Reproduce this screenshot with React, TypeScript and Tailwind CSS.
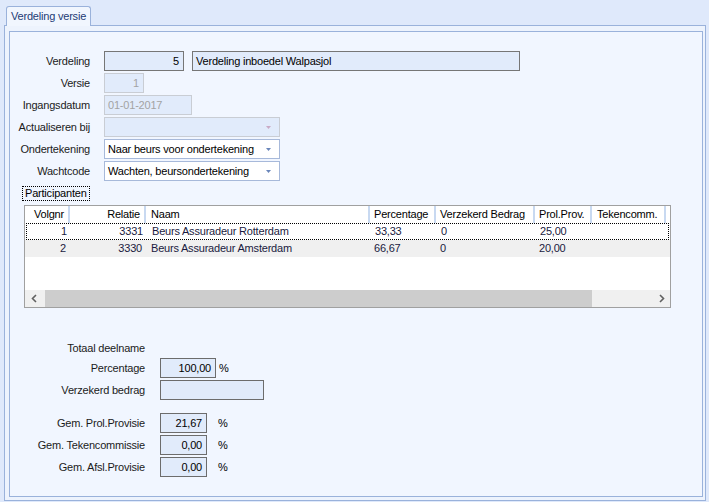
import React from "react";

const cols = [
  { label: "Volgnr", w: "w-[45px]", align: "text-right pr-[4px]" },
  { label: "Relatie", w: "w-[76px]", align: "text-right pr-[4px]" },
  { label: "Naam", w: "w-[224px]", align: "text-left pl-[5px]" },
  { label: "Percentage", w: "w-[66px]", align: "text-left pl-[4px]" },
  { label: "Verzekerd Bedrag", w: "w-[99px]", align: "text-left pl-[4px]" },
  { label: "Prol.Prov.", w: "w-[57px]", align: "text-left pl-[4px]" },
  { label: "Tekencomm.", w: "w-[74px]", align: "text-left pl-[5px]" },
];

const rows = [
  ["1", "3331", "Beurs Assuradeur Rotterdam", "33,33", "0", "25,00", ""],
  ["2", "3330", "Beurs Assuradeur Amsterdam", "66,67", "0", "20,00", ""],
];

function Arrow({ color }: { color: string }) {
  return (
    <svg width="5" height="3" viewBox="0 0 5 3" className="shrink-0">
      <path d="M0 0h5L2.5 3z" fill={color} />
    </svg>
  );
}

function Label({ children, w = "w-[80px]" }: { children: React.ReactNode; w?: string }) {
  return <span className={`${w} shrink-0 text-right text-[#1b1b1b]`}>{children}</span>;
}

function Combo({ text, disabled }: { text?: string; disabled?: boolean }) {
  return (
    <div
      className={`ml-[14px] w-[176px] h-full border flex items-center pl-[3px] pr-[8px] ${
        disabled ? "border-[#c9cdd4] bg-[#e1ebfb]" : "border-[#a7b9da] bg-white"
      }`}
    >
      <span className="flex-1 text-black">{text}</span>
      <Arrow color={disabled ? "#c9aac6" : "#6a86ba"} />
    </div>
  );
}

function NumBox({ value, w }: { value: string; w: string }) {
  return (
    <div className={`${w} h-full border border-[#6c6c6c] bg-[#e1ebfb] flex items-center justify-end pr-[4px] text-black`}>
      {value}
    </div>
  );
}

export default function App() {
  return (
    <div className="w-[709px] h-[502px] bg-[#dfe9fb] font-['Liberation_Sans',Arial,sans-serif] text-[11px] tracking-[-0.2px] leading-none pt-[6px] pl-[4px] pr-[3px] pb-[1px] flex flex-col overflow-hidden">
      {/* Tab strip */}
      <div className="flex pl-[2px]">
        <div className="relative z-10 -mb-px h-[20px] px-[4px] border border-b-0 border-[#9ab2db] rounded-t-[3px] bg-[#f1f6fe] text-[#1d3b75] flex items-center">
          Verdeling versie
        </div>
      </div>

      {/* Tab page */}
      <div className="flex-1 border border-[#9ab2db] bg-[#edf3fd] pt-[5px] pl-[4px] pr-[2px] pb-[3px] flex">
        <div className="flex-1 border border-[#9ab2db] bg-[#f1f6ff] pt-[19px] flex flex-col">
          {/* Header form */}
          <div className="flex flex-col gap-[2px]">
            <div className="flex items-center h-[20px]">
              <Label>Verdeling</Label>
              <div className="ml-[14px] w-[80px] h-full border border-[#767676] bg-[#e1ebfb] flex items-center justify-end pr-[4px] text-black">
                5
              </div>
              <div className="ml-[8px] w-[328px] h-full border border-[#767676] bg-[#e1ebfb] flex items-center pl-[3px] text-black">
                Verdeling inboedel Walpasjol
              </div>
            </div>
            <div className="flex items-center h-[20px]">
              <Label>Versie</Label>
              <div className="ml-[14px] w-[40px] h-full border border-[#c9cdd4] bg-[#e1ebfb] flex items-center justify-end pr-[4px] text-[#a3a3a3]">
                1
              </div>
            </div>
            <div className="flex items-center h-[20px]">
              <Label>Ingangsdatum</Label>
              <div className="ml-[14px] w-[88px] h-full border border-[#c9cdd4] bg-[#e1ebfb] flex items-center pl-[3px] text-[#a3a3a3]">
                01-01-2017
              </div>
            </div>
            <div className="flex items-center h-[20px]">
              <Label>Actualiseren bij</Label>
              <Combo disabled />
            </div>
            <div className="flex items-center h-[20px]">
              <Label>Ondertekening</Label>
              <Combo text="Naar beurs voor ondertekening" />
            </div>
            <div className="flex items-center h-[20px]">
              <Label>Wachtcode</Label>
              <Combo text="Wachten, beursondertekening" />
            </div>
          </div>

          {/* Participanten */}
          <div className="ml-[12px] mt-[5px] self-start h-[15px] border border-dotted border-black px-[2px] flex items-center text-black">
            Participanten
          </div>

          <div className="ml-[14px] mt-[4px] w-[647px] h-[103px] border border-[#a0a0a0] bg-white flex flex-col">
            <div className="flex h-[17px] shrink-0">
              {cols.map((c) => (
                <div
                  key={c.label}
                  className={`${c.w} ${c.align} h-full border-r-2 border-[#c8d9f1] flex items-center ${
                    c.align.startsWith("text-right") ? "justify-end" : ""
                  } text-black`}
                >
                  {c.label}
                </div>
              ))}
            </div>
            {rows.map((r, i) => (
              <div
                key={i}
                className={`flex h-[17px] shrink-0 text-[#1a1a40] ${
                  i === 0 ? "mx-px border border-dotted border-black" : "bg-[#f0f0f0]"
                }`}
              >
                {r.map((v, j) => (
                  <div
                    key={j}
                    className={`${cols[j].w} ${cols[j].align} h-full flex items-center ${
                      cols[j].align.startsWith("text-right") ? "justify-end" : ""
                    } ${i === 0 && j === 0 ? "-ml-px" : ""}`}
                  >
                    {v}
                  </div>
                ))}
              </div>
            ))}
            <div className="flex-1" />
            <div className="h-[17px] shrink-0 flex bg-[#f0f0f0]">
              <div className="w-[17px] h-full flex items-center justify-center">
                <svg width="6" height="9" viewBox="0 0 6 9">
                  <path d="M5 1L1.5 4.5L5 8" stroke="#606060" strokeWidth="1.6" fill="none" />
                </svg>
              </div>
              <div className="w-[3px]" />
              <div className="w-[547px] h-full bg-[#cdcdcd]" />
              <div className="flex-1" />
              <div className="w-[17px] h-full flex items-center justify-center">
                <svg width="6" height="9" viewBox="0 0 6 9">
                  <path d="M1 1L4.5 4.5L1 8" stroke="#606060" strokeWidth="1.6" fill="none" />
                </svg>
              </div>
            </div>
          </div>

          {/* Totals */}
          <div className="mt-[30px] flex flex-col">
            <div className="flex items-center h-[20px]">
              <Label w="w-[135px]">Totaal deelname</Label>
            </div>
            <div className="flex items-center h-[20px]">
              <Label w="w-[135px]">Percentage</Label>
              <div className="ml-[15px] h-full flex items-center">
                <NumBox value="100,00" w="w-[56px]" />
                <span className="ml-[3px] text-black">%</span>
              </div>
            </div>
            <div className="flex items-center h-[20px] mt-[2px]">
              <Label w="w-[135px]">Verzekerd bedrag</Label>
              <div className="ml-[15px] h-full">
                <NumBox value="" w="w-[104px]" />
              </div>
            </div>
            {[
              ["Gem. Prol.Provisie", "21,67"],
              ["Gem. Tekencommissie", "0,00"],
              ["Gem. Afsl.Provisie", "0,00"],
            ].map(([l, v], i) => (
              <div key={l} className={`flex items-center h-[20px] ${i === 0 ? "mt-[13px]" : "mt-[2px]"}`}>
                <Label w="w-[135px]">{l}</Label>
                <div className="ml-[15px] h-full flex items-center">
                  <NumBox value={v} w="w-[47px]" />
                  <span className="ml-[11px] text-black">%</span>
                </div>
              </div>
            ))}
          </div>
        </div>
      </div>
    </div>
  );
}
